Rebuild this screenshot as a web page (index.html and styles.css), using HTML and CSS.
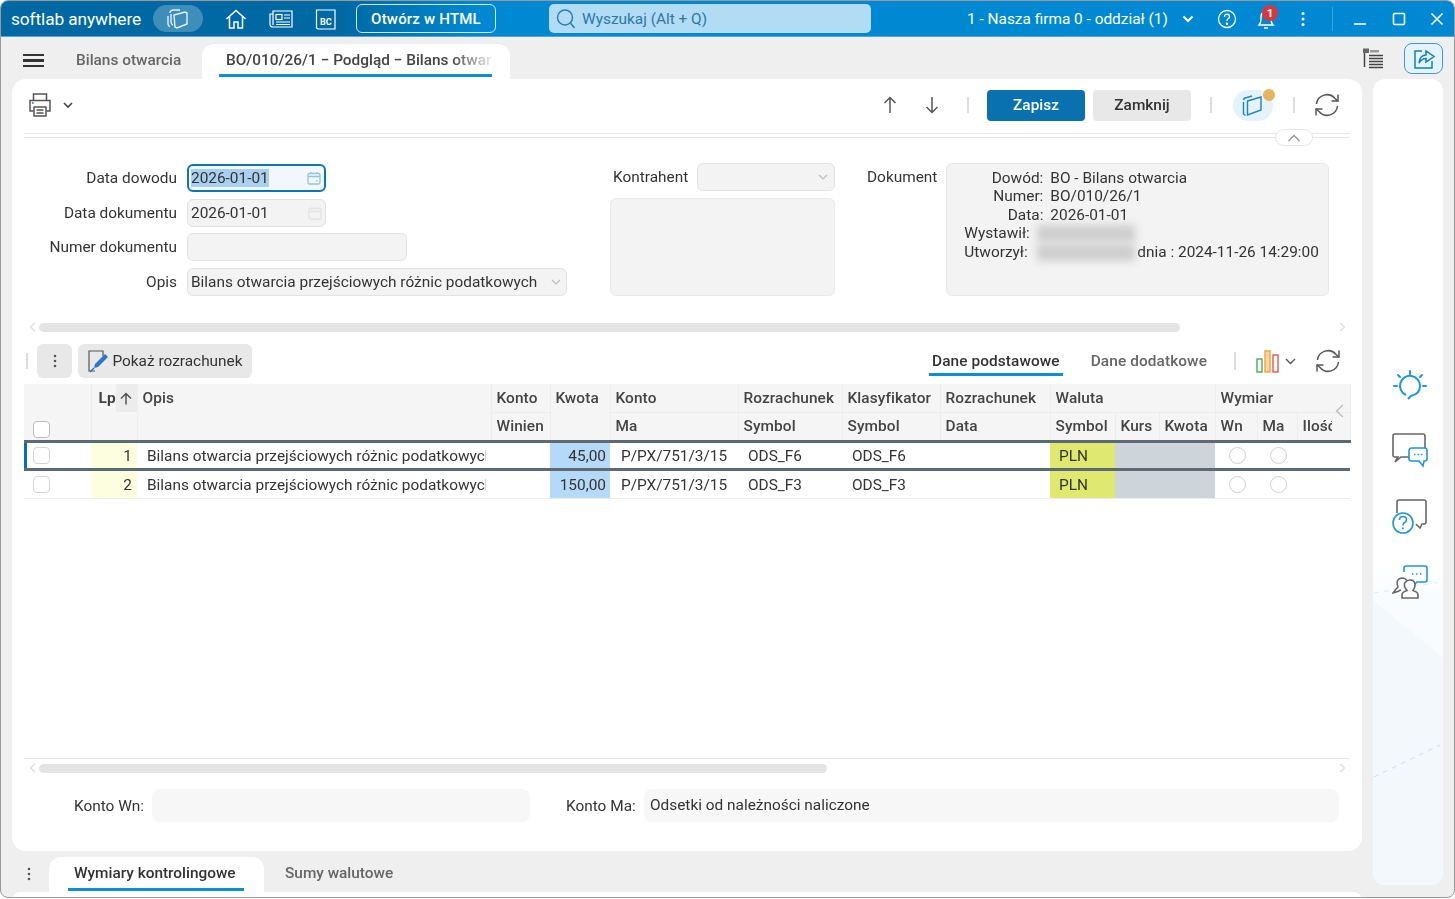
FILE: index.html
```html
<!DOCTYPE html>
<html lang="pl">
<head>
<meta charset="utf-8">
<title>softlab anywhere</title>
<link rel="stylesheet" href="styles.css">
</head>
<body>
<div class="window">
  <header class="titlebar">
    <div class="brand">softlab anywhere</div>
    <div class="pill-icon">
      <svg width="26" height="24" viewBox="0 0 26 24" fill="none" stroke="#dff1fb" stroke-width="1.4"><path d="M3 9 L3 17 Q3 19 5 19.500"/><path d="M6 7 L6 15 Q6 17 8 18"/><path d="M9 8 L20 5 L22 6 L22 17 L12 21 L10 20 Z"/><path d="M5 6 Q5 3 9 3 L15 3"/></svg>
    </div>
    <div class="nav-icons">
      <svg width="22" height="22" viewBox="0 0 22 22" fill="none" stroke="#fff" stroke-width="1.5"><path d="M1.500 11 L11 2.500 L20.500 11"/><path d="M4.500 9 V20 H9 V14 H13 V20 H17.500 V9"/></svg>
      <svg width="24" height="22" viewBox="0 0 24 22" fill="none" stroke="#fff" stroke-width="1.2"><path d="M4 3 H23 V19 H4 Q1 19 1 16 V6 H4 Z"/><path d="M4 6 V17"/><rect x="7" y="6.500" width="6" height="5"/><path d="M15 7 H21 M15 10 H21 M7 14 H21 M7 16.500 H21"/></svg>
      <svg width="22" height="24" viewBox="0 0 22 24" fill="none" stroke="#fff" stroke-width="1.2"><path d="M2 3 H20 V22 H3 L1.500 21 V3 Z"/><text x="5" y="18" class="bc-text">BC</text></svg>
    </div>
    <button class="html-btn">Otwórz w HTML</button>
    <div class="search">
      <svg width="22" height="22" viewBox="0 0 22 22" fill="none" stroke="#2a7fb3" stroke-width="1.5"><circle cx="10" cy="9.500" r="7.500"/><path d="M15.500 15 L19.500 20"/></svg>
      <span>Wyszukaj (Alt + Q)</span>
    </div>
    <div class="company">1 - Nasza firma 0 - oddział (1)</div>
    <svg class="chev-w" width="12" height="8" viewBox="0 0 12 8" fill="none" stroke="#fff" stroke-width="2"><path d="M1.500 1.500 L6 6 L10.500 1.500"/></svg>
    <svg class="help" width="20" height="20" viewBox="0 0 20 20" fill="none" stroke="#fff" stroke-width="1.300"><circle cx="10" cy="10" r="8.500"/><path d="M7.500 8 Q7.500 5.200 10 5.200 Q12.500 5.200 12.500 7.500 Q12.500 9 10.800 10 Q10 10.600 10 12"/><circle cx="10" cy="14.800" r=".6" fill="#fff"/></svg>
    <div class="bell">
      <svg width="20" height="24" viewBox="0 0 20 24" fill="none" stroke="#fff" stroke-width="1.400"><path d="M3 18 Q5 16 5 12 V10 Q5 5 10 5 Q15 5 15 10 V12 Q15 16 17 18 Z"/><path d="M8 21 H12"/></svg>
      <span class="badge">1</span>
    </div>
    <svg class="kebab-w" width="4" height="16" viewBox="0 0 4 16" fill="#fff"><circle cx="2" cy="2.500" r="1.500"/><circle cx="2" cy="8" r="1.500"/><circle cx="2" cy="13.500" r="1.500"/></svg>
    <div class="bar-sep"></div>
    <div class="win-ctrls">
      <svg width="14" height="14" viewBox="0 0 14 14" stroke="#fff" stroke-width="1.700"><path d="M1 12 H13"/></svg>
      <svg width="14" height="14" viewBox="0 0 14 14" fill="none" stroke="#fff" stroke-width="1.600"><rect x="1.500" y="1.500" width="11" height="11" rx="1"/></svg>
      <svg width="14" height="14" viewBox="0 0 14 14" stroke="#fff" stroke-width="1.600"><path d="M1.500 1.500 L12.500 12.500 M12.500 1.500 L1.500 12.500"/></svg>
    </div>
  </header>

  <nav class="tabbar">
    <div class="burger"><i></i><i></i><i></i></div>
    <div class="tab">Bilans otwarcia</div>
    <div class="tab tab-active">
      <div class="tab-label"><span>BO/010/26/1 − Podgląd − Bilans otwarcia</span></div>
    </div>
    <div class="tabbar-right">
      <svg width="24" height="24" viewBox="0 0 24 24" fill="none" stroke="#444"><rect x="2" y="2.500" width="6" height="4.500" fill="#666" stroke="none"/><rect x="9" y="4" width="9" height="2.500" fill="#999" stroke="none"/><path d="M3.500 7 V21" stroke-width="1.500"/><path d="M8 9.500 H22 M8 12.500 H22 M8 15.500 H22 M8 18.500 H22 M8 21.500 H22" stroke-width="1.500"/></svg>
      <div class="share">
        <svg width="24" height="24" viewBox="0 0 24 24" fill="none" stroke="#1480bd" stroke-width="1.500"><path d="M10 5 H3 V22 H20 V15"/><path d="M7 17 Q8 9 14 9 V5 L22 10.500 L14 16 V12.500 Q10 12.500 7 17 Z"/></svg>
      </div>
    </div>
  </nav>

  <div class="workspace">
    <div class="center">
      <main class="card">
        <div class="toolbar">
          <div class="print">
            <svg width="24" height="26" viewBox="0 0 24 26" fill="none" stroke="#555" stroke-width="1.500"><path d="M5.500 8 V2 H18.500 V8"/><path d="M5.500 19 H2 V8.500 H22 V19 H18.500"/><rect x="6" y="15" width="12" height="9"/><path d="M8.500 18 H15.500 M8.500 21 H15.500"/><circle cx="4.800" cy="11" r="1" fill="#1d8fd1" stroke="none"/></svg>
            <svg width="10" height="7" viewBox="0 0 10 7" fill="none" stroke="#444" stroke-width="1.600"><path d="M1 1 L5 5 L9 1"/></svg>
          </div>
          <div class="toolbar-right">
            <svg class="arrow-up" width="14" height="18" viewBox="0 0 14 18" fill="none" stroke="#555" stroke-width="1.500"><path d="M7 17 V1.500 M1.500 7 L7 1.500 L12.500 7"/></svg>
            <svg class="arrow-down" width="14" height="18" viewBox="0 0 14 18" fill="none" stroke="#555" stroke-width="1.500"><path d="M7 1 V16.500 M1.500 11 L7 16.500 L12.500 11"/></svg>
            <span class="vsep vsep-a"></span>
            <button class="btn-primary">Zapisz</button>
            <button class="btn-secondary">Zamknij</button>
            <span class="vsep vsep-b"></span>
            <div class="book-wrap">
              <svg width="24" height="24" viewBox="0 0 24 24" fill="none" stroke="#1e84bf" stroke-width="1.400"><path d="M2.500 9 V21 L4.500 22.500"/><path d="M6.500 8 L20 4 V17 L6.500 22 Z"/><path d="M2.500 7 Q3 4.500 6 4.500 L11 3"/></svg>
              <i class="dot"></i>
            </div>
            <span class="vsep vsep-c"></span>
            <svg class="refresh" width="26" height="26" viewBox="0 0 26 26" fill="none" stroke="#555" stroke-width="1.500"><path d="M2.500 12 A10.500 10.500 0 0 1 21 6.500 L24 9"/><path d="M24 2.500 V9 H17.500"/><path d="M23.500 14 A10.500 10.500 0 0 1 5 19.500 L2 17"/><path d="M2 23.500 V17 H8.500"/></svg>
          </div>
        </div>

        <div class="divider">
          <span class="collapse"><svg width="14" height="8" viewBox="0 0 14 8" fill="none" stroke="#999" stroke-width="1.500"><path d="M1.500 7 L7 1.500 L12.500 7"/></svg></span>
        </div>

        <section class="form">
          <div class="form-left">
            <label class="lbl">Data dowodu</label>
            <div class="inp inp-date inp-focus"><mark>2026-01-01</mark>
              <svg width="14" height="14" viewBox="0 0 14 14" fill="none" stroke="#8fc5df" stroke-width="1.300"><rect x="1" y="2.500" width="12" height="10.500" rx="1.500"/><path d="M1 5.500 H13 M4 1 V3 M10 1 V3"/><rect x="9" y="9" width="1.500" height="1.500" fill="#8fc5df" stroke="none"/></svg>
            </div>
            <label class="lbl">Data dokumentu</label>
            <div class="inp inp-date"><span>2026-01-01</span>
              <svg width="14" height="14" viewBox="0 0 14 14" fill="none" stroke="#e3e3e3" stroke-width="1.300"><rect x="1" y="2.500" width="12" height="10.500" rx="1.500"/><path d="M1 5.500 H13 M4 1 V3 M10 1 V3"/></svg>
            </div>
            <label class="lbl">Numer dokumentu</label>
            <div class="inp inp-num"></div>
            <label class="lbl">Opis</label>
            <div class="inp inp-opis"><span>Bilans otwarcia przejściowych różnic podatkowych</span>
              <svg width="10" height="6" viewBox="0 0 10 6" fill="none" stroke="#bbb" stroke-width="1.200"><path d="M1 1 L5 5 L9 1"/></svg>
            </div>
          </div>
          <div class="form-mid">
            <div class="kontr-row">
              <label class="lbl">Kontrahent</label>
              <div class="inp inp-kontr">
                <svg width="10" height="6" viewBox="0 0 10 6" fill="none" stroke="#bbb" stroke-width="1.200"><path d="M1 1 L5 5 L9 1"/></svg>
              </div>
            </div>
            <div class="kontr-box"></div>
          </div>
          <div class="form-doc">
            <label class="lbl lbl-doc">Dokument</label>
            <div class="doc-box">
              <div class="doc-line l1"><span class="k">Dowód:</span><span>BO - Bilans otwarcia</span></div>
              <div class="doc-line l2"><span class="k">Numer:</span><span>BO/010/26/1</span></div>
              <div class="doc-line l3"><span class="k">Data:</span><span>2026-01-01</span></div>
              <div class="doc-line l4"><span class="k">Wystawił:</span><span class="blurred"></span></div>
              <div class="doc-line l5"><span class="k">Utworzył:</span><span class="blurred"></span><span>dnia : 2024-11-26 14:29:00</span></div>
            </div>
          </div>
        </section>

        <div class="hscroll hscroll-top">
          <svg width="7" height="10" viewBox="0 0 7 10" fill="none" stroke="#ddd" stroke-width="1.200"><path d="M6 1 L1.500 5 L6 9"/></svg>
          <div class="track"><div class="thumb thumb-top"></div></div>
          <svg width="7" height="10" viewBox="0 0 7 10" fill="none" stroke="#ddd" stroke-width="1.200"><path d="M1 1 L5.500 5 L1 9"/></svg>
        </div>

        <div class="grid-bar">
          <span class="vsep vsep-grid"></span>
          <button class="gbtn gbtn-kebab"><svg width="4" height="14" viewBox="0 0 4 14" fill="#555"><circle cx="2" cy="2" r="1.300"/><circle cx="2" cy="7" r="1.300"/><circle cx="2" cy="12" r="1.300"/></svg></button>
          <button class="gbtn gbtn-show">
            <svg width="22" height="24" viewBox="0 0 22 24" fill="none"><path d="M8 22 H2 V2 H16 V7" stroke="#555" stroke-width="1.200"/><path d="M18 5 L21 8 L11 18 L7 19 L8 15 Z" fill="#2f74c7"/><path d="M7 19 L3 23" stroke="#2f74c7" stroke-width="1.500"/></svg>
            <span>Pokaż rozrachunek</span>
          </button>
          <div class="grid-bar-right">
            <div class="subtab subtab-active">Dane podstawowe</div>
            <div class="subtab">Dane dodatkowe</div>
            <span class="vsep vsep-grid2"></span>
            <svg class="chart" width="23" height="23" viewBox="0 0 23 23" fill="#fff" stroke-width="1.400"><rect x="1" y="9" width="5" height="13" stroke="#3fae5a"/><rect x="9" y="1" width="5" height="21" stroke="#f2a33a" fill="#fbd9a5"/><rect x="17" y="5" width="5" height="17" stroke="#e8544e"/></svg>
            <svg class="chev-g" width="11" height="7" viewBox="0 0 11 7" fill="none" stroke="#555" stroke-width="1.400"><path d="M1 1 L5.500 5.500 L10 1"/></svg>
            <svg class="refresh-g" width="26" height="26" viewBox="0 0 26 26" fill="none" stroke="#555" stroke-width="1.500"><path d="M2.500 12 A10.500 10.500 0 0 1 21 6.500 L24 9"/><path d="M24 2.500 V9 H17.500"/><path d="M23.500 14 A10.500 10.500 0 0 1 5 19.500 L2 17"/><path d="M2 23.500 V17 H8.500"/></svg>
          </div>
        </div>

        <div class="table-area">
          <table class="tbl">
            <colgroup>
              <col class="c-chk"><col class="c-a"><col class="c-lp"><col class="c-opis"><col class="c-wn"><col class="c-kw"><col class="c-ma"><col class="c-rs"><col class="c-kl"><col class="c-rd"><col class="c-sy"><col class="c-ku"><col class="c-kt"><col class="c-w1"><col class="c-w2"><col class="c-il">
            </colgroup>
            <thead>
              <tr>
                <th rowspan="2" colspan="2" class="th-chk"><span class="chk chk-h"></span></th>
                <th rowspan="2" class="th-lp"><div class="lp-head"><b>Lp</b><span class="sort"><svg width="12" height="13" viewBox="0 0 12 13" fill="none" stroke="#555" stroke-width="1.500"><path d="M6 12.500 V1.500 M1 6.500 L6 1.500 L11 6.500"/></svg></span></div></th>
                <th rowspan="2" class="th-opis">Opis</th>
                <th>Konto</th>
                <th rowspan="2" class="th-top">Kwota</th>
                <th>Konto</th>
                <th>Rozrachunek</th>
                <th>Klasyfikator</th>
                <th>Rozrachunek</th>
                <th colspan="3">Waluta</th>
                <th colspan="3">Wymiar</th>
              </tr>
              <tr class="head-second">
                <th>Winien</th>
                <th>Ma</th>
                <th>Symbol</th>
                <th>Symbol</th>
                <th>Data</th>
                <th>Symbol</th>
                <th>Kurs</th>
                <th>Kwota</th>
                <th>Wn</th>
                <th>Ma</th>
                <th><div class="th-clip">Ilość</div></th>
              </tr>
            </thead>
            <tbody>
              <tr class="row-current">
                <td class="td-chk"><span class="chk"></span></td><td></td>
                <td class="td-lp">1</td>
                <td class="td-opis"><div class="clip">Bilans otwarcia przejściowych różnic podatkowych</div></td>
                <td></td>
                <td class="td-kw">45,00</td>
                <td class="td-txt">P/PX/751/3/15</td>
                <td class="td-txt">ODS_F6</td>
                <td class="td-txt">ODS_F6</td>
                <td></td>
                <td class="td-pln">PLN</td>
                <td class="td-grey"></td><td class="td-grey"></td>
                <td class="td-radio"><span class="radio"></span></td>
                <td class="td-radio"><span class="radio"></span></td>
                <td></td>
              </tr>
              <tr>
                <td class="td-chk"><span class="chk"></span></td><td></td>
                <td class="td-lp">2</td>
                <td class="td-opis"><div class="clip">Bilans otwarcia przejściowych różnic podatkowych</div></td>
                <td></td>
                <td class="td-kw">150,00</td>
                <td class="td-txt">P/PX/751/3/15</td>
                <td class="td-txt">ODS_F3</td>
                <td class="td-txt">ODS_F3</td>
                <td></td>
                <td class="td-pln">PLN</td>
                <td class="td-grey"></td><td class="td-grey"></td>
                <td class="td-radio"><span class="radio"></span></td>
                <td class="td-radio"><span class="radio"></span></td>
                <td></td>
              </tr>
            </tbody>
          </table>
          <svg class="tbl-left" width="9" height="14" viewBox="0 0 9 14" fill="none" stroke="#bbb" stroke-width="1.300"><path d="M8 1 L1.500 7 L8 13"/></svg>
        </div>

        <div class="hscroll hscroll-bot">
          <svg width="7" height="10" viewBox="0 0 7 10" fill="none" stroke="#ddd" stroke-width="1.200"><path d="M6 1 L1.500 5 L6 9"/></svg>
          <div class="track"><div class="thumb thumb-bot"></div></div>
          <svg width="7" height="10" viewBox="0 0 7 10" fill="none" stroke="#ddd" stroke-width="1.200"><path d="M1 1 L5.500 5 L1 9"/></svg>
        </div>

        <div class="konta">
          <label class="lbl lbl-wn">Konto Wn:</label>
          <div class="konto-box konto-wn"></div>
          <label class="lbl lbl-ma">Konto Ma:</label>
          <div class="konto-box konto-ma">Odsetki od należności naliczone</div>
        </div>
      </main>

      <div class="bottom-tabs">
        <svg class="kebab-b" width="4" height="14" viewBox="0 0 4 14" fill="#555"><circle cx="2" cy="2" r="1.300"/><circle cx="2" cy="7" r="1.300"/><circle cx="2" cy="12" r="1.300"/></svg>
        <div class="btab btab-active"><span>Wymiary kontrolingowe</span></div>
        <div class="btab">Sumy walutowe</div>
      </div>
      <div class="strip"></div>
    </div>

    <aside class="rail">
      <svg class="rail-decor" width="70" height="806" viewBox="0 0 70 806" fill="none"><path d="M0 521 L70 579 V806 H0 Z" fill="#f2f8fc"/><path d="M1 514 L68 503" stroke="#dfeff9" stroke-width="1.200" stroke-dasharray="5 5"/><path d="M1 698 L67 666" stroke="#cfe7f6" stroke-width="1.200" stroke-dasharray="5 5"/></svg>
      <svg class="rail-icon" width="34" height="34" viewBox="0 0 34 34" fill="none" stroke="#1d97dc" stroke-width="2"><path d="M15 30 L18 27 Q27 25 27 17 A10 10 0 1 0 13 26"/><path d="M17 2 V5 M5 6 L7 8 M29 6 L27 8 M1 17 H4 M30 17 H33" stroke-linecap="round"/></svg>
      <svg class="rail-icon" width="36" height="36" viewBox="0 0 36 36" fill="none"><path d="M20 24 H9 L3 29 L6 24 H3 Q1 24 1 22 V3 Q1 1 3 1 H31 Q33 1 33 3 V15" stroke="#666" stroke-width="1.600"/><path d="M17 18 Q17 15 20 15 H33 Q35 15 35 18 V26 Q35 28 33 28 H32 L31 33 L27 28 H20 Q17 28 17 26 Z" stroke="#1d97dc" stroke-width="1.600" fill="#fff"/><path d="M22 21.500 H23.500 M25.500 21.500 H27 M29 21.500 H30.500" stroke="#1d97dc" stroke-width="1.500"/></svg>
      <svg class="rail-icon" width="36" height="36" viewBox="0 0 36 36" fill="none"><path d="M5 14 V3 Q5 1 7 1 H32 Q34 1 34 3 V23 Q34 25 32 25 H30 L28 29 L24 25" stroke="#666" stroke-width="1.600"/><circle cx="11" cy="24" r="10" fill="#fff" stroke="#1d97dc" stroke-width="1.600"/><path d="M7.500 21 Q7.500 17.500 11 17.500 Q14.500 17.500 14.500 20.500 Q14.500 22.500 12 24 Q11 24.800 11 26.500" stroke="#1d97dc" stroke-width="1.600"/><circle cx="11" cy="29.300" r="1" fill="#1d97dc"/></svg>
      <svg class="rail-icon" width="36" height="36" viewBox="0 0 36 36" fill="none"><path d="M12 7 V3 Q12 1 14 1 H33 Q35 1 35 3 V15 Q35 17 33 17 H25 L21 21" stroke="#1d97dc" stroke-width="1.600"/><path d="M20 9 H21.500 M24 9 H25.500 M28 9 H29.500" stroke="#1d97dc" stroke-width="1.500"/><path d="M9 25 Q5 27 1 28 Q4 24 6 22 Q3 14 10 13 Q14 13 15 16" stroke="#666" stroke-width="1.500"/><path d="M10 33 V30 Q10 27 15 25.500 Q11 21 13 17.500 Q15 15 18 15 Q23 15 23 20 Q23 23 21 25.500 Q26 27 26 30 V33 Z" fill="#fff" stroke="#666" stroke-width="1.600"/></svg>
    </aside>
  </div>
</div>
</body>
</html>
```

FILE: styles.css
```css
* { box-sizing: border-box; }
html, body { margin: 0; padding: 0; }
body { width: 1455px; height: 899px; overflow: hidden; font-family: Roboto, "Liberation Sans", sans-serif; font-size: 15.4px; color: #333; background: #fff; }
button { font-family: inherit; }

.window { width: 1455px; height: 898px; display: flex; flex-direction: column; background: #efefef; border: 1px solid #9a9a9a; border-radius: 8px; overflow: hidden; filter: blur(.35px); }

/* Title bar */
.titlebar { flex: 0 0 36px; display: flex; align-items: center; background: linear-gradient(90deg, #0069a3 0, #0069a3 340px, #0089d2 480px, #0089d2 100%); color: #fff; border-bottom: 1px solid #5aa5cf; }
.titlebar > * { flex: none; }
.brand { margin-left: 10px; font-size: 17.300px; width: 142px; white-space: nowrap; letter-spacing: -.1px; }
.pill-icon { width: 50px; height: 27px; border-radius: 14px; background: #3f8db9; display: flex; align-items: center; justify-content: center; margin-right: 22px; }
.nav-icons { display: flex; align-items: center; gap: 22px; }
.bc-text { font: 700 9px Roboto, sans-serif; fill: #fff; stroke: none; }
.html-btn { margin-left: 19px; width: 140px; height: 29px; border: 1.500px solid #cfe8f5; border-radius: 6px; background: transparent; color: #fff; font-size: 15px; font-weight: 500; letter-spacing: .2px; padding: 0; }
.search { margin-left: 53px; width: 322px; height: 29px; background: #b2dcf3; border-radius: 5px; display: flex; align-items: center; gap: 5px; padding-left: 6px; color: #2a78a8; font-size: 15.400px; }
.company { margin-left: 96px; font-size: 15.400px; width: 215px; white-space: nowrap; }
.chev-w { margin-left: 0; }
.help { margin-left: 23px; }
.bell { position: relative; margin-left: 19px; width: 20px; height: 24px; }
.badge { position: absolute; left: 6px; top: -2px; width: 16px; height: 16px; border-radius: 50%; background: #d9363e; color: #fff; font-size: 11.500px; font-weight: 700; text-align: center; line-height: 16px; }
.kebab-w { margin-left: 25px; }
.bar-sep { margin-left: 27px; width: 1px; height: 24px; background: #3aa4dd; }
.win-ctrls { margin-left: 20px; display: flex; gap: 24.500px; align-items: center; }

/* Tabs */
.tabbar { flex: 0 0 42px; display: flex; align-items: flex-end; }
.burger { width: 21px; margin: 0 0 12px 22px; display: flex; flex-direction: column; gap: 3px; }
.burger i { display: block; height: 2.500px; background: #333; }
.tab { height: 35px; padding-top: 7px; color: #666; font-weight: 500; margin-left: 32px; white-space: nowrap; width: 126px; }
.tab-active { margin-left: 0; background: #fff; border-radius: 12px 12px 0 0; width: 308px; padding: 7px 18px 0 17px; color: #444; }
.tab-label { height: 26px; border-bottom: 3px solid #0c8fd8; overflow: hidden; white-space: nowrap; padding-left: 7px; }
.tab-label span { display: block; width: 266px; overflow: hidden; -webkit-mask-image: linear-gradient(90deg, #000 0, #000 225px, rgba(0,0,0,.1) 266px); mask-image: linear-gradient(90deg, #000 0, #000 225px, rgba(0,0,0,.1) 266px); }
.tabbar-right { margin-left: auto; display: flex; align-items: center; gap: 19px; margin-right: 11px; align-self: center; }
.share { width: 39px; height: 31px; border: 1.500px solid #3a9dd2; border-radius: 8px; background: #e4f2fa; display: flex; align-items: center; justify-content: center; }

/* Workspace */
.workspace { flex: 1; display: flex; padding-left: 11px; min-height: 0; }
.center { width: 1350px; display: flex; flex-direction: column; }
.card { flex: 0 0 772px; background: #fff; border-radius: 14px; padding: 0 12px; display: flex; flex-direction: column; }
.rail { position: relative; margin-left: 11px; width: 70px; height: 806px; border-radius: 12px; overflow: hidden; background: linear-gradient(180deg, #fff 0, #fff 490px, #f9fcfe 515px, #f9fcfe 100%); display: flex; flex-direction: column; align-items: center; padding: 290px 0 0 4px; gap: 30px; }
.rail-decor { position: absolute; left: 0; top: 0; }
.rail-icon { position: relative; flex: none; }

/* Toolbar */
.toolbar { flex: 0 0 52px; display: flex; align-items: center; }
.print { margin-left: 4px; display: flex; align-items: center; gap: 11px; }
.toolbar-right { margin-left: auto; display: flex; align-items: center; height: 32px; padding-right: 10px; }
.arrow-up { margin-right: 28px; }
.arrow-down { margin-right: 28px; }
.vsep { display: inline-block; width: 2px; height: 16px; background: #ddd; }
.vsep-a { margin-right: 18px; }
.btn-primary { width: 98px; height: 31px; border: 0; border-radius: 4px; background: #0a71b0; color: #fff; font-size: 15.400px; font-weight: 500; padding: 0; }
.btn-secondary { margin-left: 8px; width: 98px; height: 31px; border: 0; border-radius: 4px; background: #e8e8e8; color: #333; font-size: 15.400px; font-weight: 500; padding: 0; }
.vsep-b { margin: 0 21px 0 19px; }
.book-wrap { position: relative; width: 40px; height: 31px; border-radius: 16px; background: #e3f2fb; display: flex; align-items: center; justify-content: center; }
.dot { position: absolute; right: -2px; top: -1px; width: 12px; height: 12px; border-radius: 50%; background: #e4b55c; }
.vsep-c { margin: 0 19px 0 20px; }
.refresh { display: block; }

.divider { position: relative; flex: none; height: 5px; border-top: 1px solid #e6e6e6; border-bottom: 1px solid #e6e6e6; margin-top: 2px; }
.collapse { position: absolute; left: 1251px; top: -5px; width: 38px; height: 17px; background: #fff; border: 1px solid #e6e6e6; border-radius: 9px; display: flex; align-items: center; justify-content: center; }

/* Form */
.form { flex: none; height: 134px; margin-top: 25px; display: flex; align-items: flex-start; }
.lbl { color: #333; white-space: nowrap; text-align: right; }
.form-left { flex: none; width: 544px; display: grid; grid-template-columns: 153px auto; column-gap: 10px; row-gap: 6.700px; justify-items: start; align-items: center; padding-top: 1px; }
.form-left .lbl { justify-self: end; }
.inp { height: 28px; background: #f3f3f3; border: 1px solid #e2e2e2; border-radius: 6px; display: flex; align-items: center; justify-content: space-between; padding: 0 5px 0 3px; color: #333; }
.inp-date { width: 139px; padding-right: 3px; }
.inp-focus { border: 2.500px solid #0c76b4; background: #f1f7fb; padding-left: 2px; }
mark { background: #a9d0ef; color: #333; }
.inp-num { width: 220px; }
.inp-opis { width: 380px; }
.form-mid { flex: none; margin-left: 42px; width: 225px; display: flex; flex-direction: column; gap: 7px; }
.kontr-row { display: flex; align-items: center; justify-content: space-between; padding-left: 3px; }
.inp-kontr { width: 138px; justify-content: flex-end; padding-right: 6px; }
.kontr-box { height: 98px; background: #f3f3f3; border: 1px solid #eaeaea; border-radius: 6px; }
.form-doc { flex: none; margin-left: 32px; display: flex; align-items: flex-start; gap: 9px; }
.lbl-doc { line-height: 29px; }
.doc-box { width: 383px; height: 133px; background: #f3f3f3; border: 1px solid #e8e8e8; border-radius: 6px; padding: 4.500px 0 0 17px; line-height: 18.500px; }
.doc-line { display: flex; white-space: nowrap; }
.doc-line .k { text-align: right; }
.l1 .k, .l2 .k, .l3 .k { width: 79px; margin-right: 7px; }
.l4 .k, .l5 .k { width: 66px; text-align: left; margin-right: 7px; }
.blurred { width: 98px; height: 17px; margin-top: 1px; background: #cdcdcd; filter: blur(4px); margin-right: 2px; }

/* Scrollers */
.hscroll { flex: none; display: flex; align-items: center; gap: 3px; height: 10px; }
.hscroll-top { margin-top: 25px; padding-left: 5px; padding-right: 4px; }
.track { flex: 1; }
.thumb { height: 9px; border-radius: 5px; background: #e4e4e4; }
.thumb-top { width: 1141px; }
.thumb-bot { width: 788px; }

/* Grid bar */
.grid-bar { flex: none; margin-top: 11px; height: 36px; display: flex; align-items: center; }
.vsep-grid { margin-right: 9px; margin-left: 2px; width: 2px; height: 16px; }
.gbtn { border: 0; background: #e8e8e8; border-radius: 6px; height: 34px; display: flex; align-items: center; justify-content: center; padding: 0; color: #333; font-size: 15.400px; }
.gbtn-kebab { width: 35px; }
.gbtn-show { width: 174px; margin-left: 6px; gap: 3px; }
.grid-bar-right { margin-left: auto; display: flex; align-items: center; height: 36px; }
.subtab { align-self: flex-start; height: 33px; line-height: 36px; font-weight: 500; color: #666; white-space: nowrap; padding: 0 4px; letter-spacing: .1px; }
.subtab-active { color: #333; border-bottom: 3px solid #0c8fd8; margin-right: 24px; padding: 0 3px; }
.vsep-grid2 { margin: 0 20px 0 23px; height: 18px; width: 2px; }
.chart { display: block; }
.chev-g { margin-left: 6px; margin-right: 19px; }
.refresh-g { display: block; margin-right: 9px; }

/* Table */
.table-area { position: relative; flex: none; margin-top: 5px; height: 375px; border-bottom: 1px solid #e6e6e6; }
.tbl { width: 1326px; table-layout: fixed; border-collapse: collapse; }
.c-chk { width: 37px; } .c-a { width: 30px; } .c-lp { width: 46px; } .c-opis { width: 354px; } .c-wn { width: 59px; } .c-kw { width: 60px; } .c-ma { width: 128px; } .c-rs { width: 104px; } .c-kl { width: 98px; } .c-rd { width: 110px; } .c-sy { width: 65px; } .c-ku { width: 44px; } .c-kt { width: 56px; } .c-w1 { width: 42px; } .c-w2 { width: 40px; } .c-il { width: 53px; }
.tbl th { background: #f5f5f5; font-weight: 500; color: #444; text-align: left; padding: 0 0 0 5px; height: 28px; line-height: 28px; white-space: nowrap; overflow: hidden; border-right: 1px solid #ededed; border-bottom: 1px solid #ededed; letter-spacing: .1px; }
.tbl .head-second th { vertical-align: top; line-height: 26px; height: 29px; }
.tbl th.th-chk { vertical-align: bottom; padding: 0 0 2px 9px; }
.tbl th.th-lp, .tbl th.th-opis, .tbl th.th-top { vertical-align: top; }
.tbl th.th-lp { padding: 0; }
.lp-head { display: flex; justify-content: space-between; padding-left: 7px; }
.lp-head b { font-weight: 700; }
.sort { width: 22px; height: 28px; background: #ececec; display: flex; align-items: center; justify-content: center; }
.th-clip { width: 29px; overflow: hidden; }
.tbl td { height: 29px; padding: 0; border-bottom: 1px solid #ececec; white-space: nowrap; overflow: hidden; color: #333; }
.tbl .row-current td { border-top: 3px solid #5d6a73; border-bottom: 3px solid #5d6a73; height: 28px; }
.row-current .td-chk { box-shadow: inset 3px 0 0 #0a71b0; }
.tbl .td-chk { padding-left: 9px; }
.chk { display: block; width: 17px; height: 17px; background: #fff; border: 1.500px solid #d5d5d5; border-radius: 4px; }
.chk-h { border-color: #bbb; }
.tbl .td-lp { background: #fdfde0; text-align: right; padding-right: 5px; }
.tbl .td-opis { padding: 0 5px 0 10px; }
.clip { overflow: hidden; width: 339px; }
.tbl .td-kw { background: #b5daf7; text-align: right; padding-right: 4px; }
.tbl .td-txt { padding-left: 11px; }
.tbl .td-txt + .td-txt { padding-left: 10px; }
.tbl .td-pln { background: #dfe86f; padding-left: 9px; }
.td-grey { background: #cdd5db; }
.tbl .td-radio { padding-left: 14px; }
.tbl .td-radio + .td-radio { padding-left: 13px; }
.radio { display: block; width: 17px; height: 17px; border: 1.500px solid #cfcfcf; border-radius: 50%; }
.tbl-left { position: absolute; right: 6px; top: 20px; }

.hscroll-bot { margin-top: 4px; padding-left: 5px; padding-right: 4px; }
.konta { flex: none; margin-top: 16px; display: flex; align-items: center; height: 33px; }
.lbl-wn { margin-left: 50px; width: 70px; text-align: left; }
.konto-box { height: 33px; background: #f7f7f7; border-radius: 8px; line-height: 33px; padding-left: 6px; }
.konto-wn { margin-left: 8px; width: 378px; }
.lbl-ma { margin-left: 36px; width: 70px; text-align: left; }
.konto-ma { margin-left: 8px; width: 695px; }

/* Bottom tabs */
.bottom-tabs { flex: 0 0 35px; margin-top: 6px; display: flex; align-items: flex-start; }
.kebab-b { margin: 10px 0 0 15px; }
.btab { height: 35px; padding-top: 7px; color: #666; font-weight: 500; white-space: nowrap; }
.btab-active { margin-left: 18px; width: 215px; background: #fff; border-radius: 12px 12px 0 0; padding: 7px 20px 0 19px; color: #333; }
.btab-active span { display: block; height: 27px; border-bottom: 3px solid #0c8fd8; padding-left: 6px; }
.btab-active + .btab { margin-left: 21px; }
.strip { flex: 0 0 8px; background: #fff; border-radius: 8px 8px 0 0; }
```
